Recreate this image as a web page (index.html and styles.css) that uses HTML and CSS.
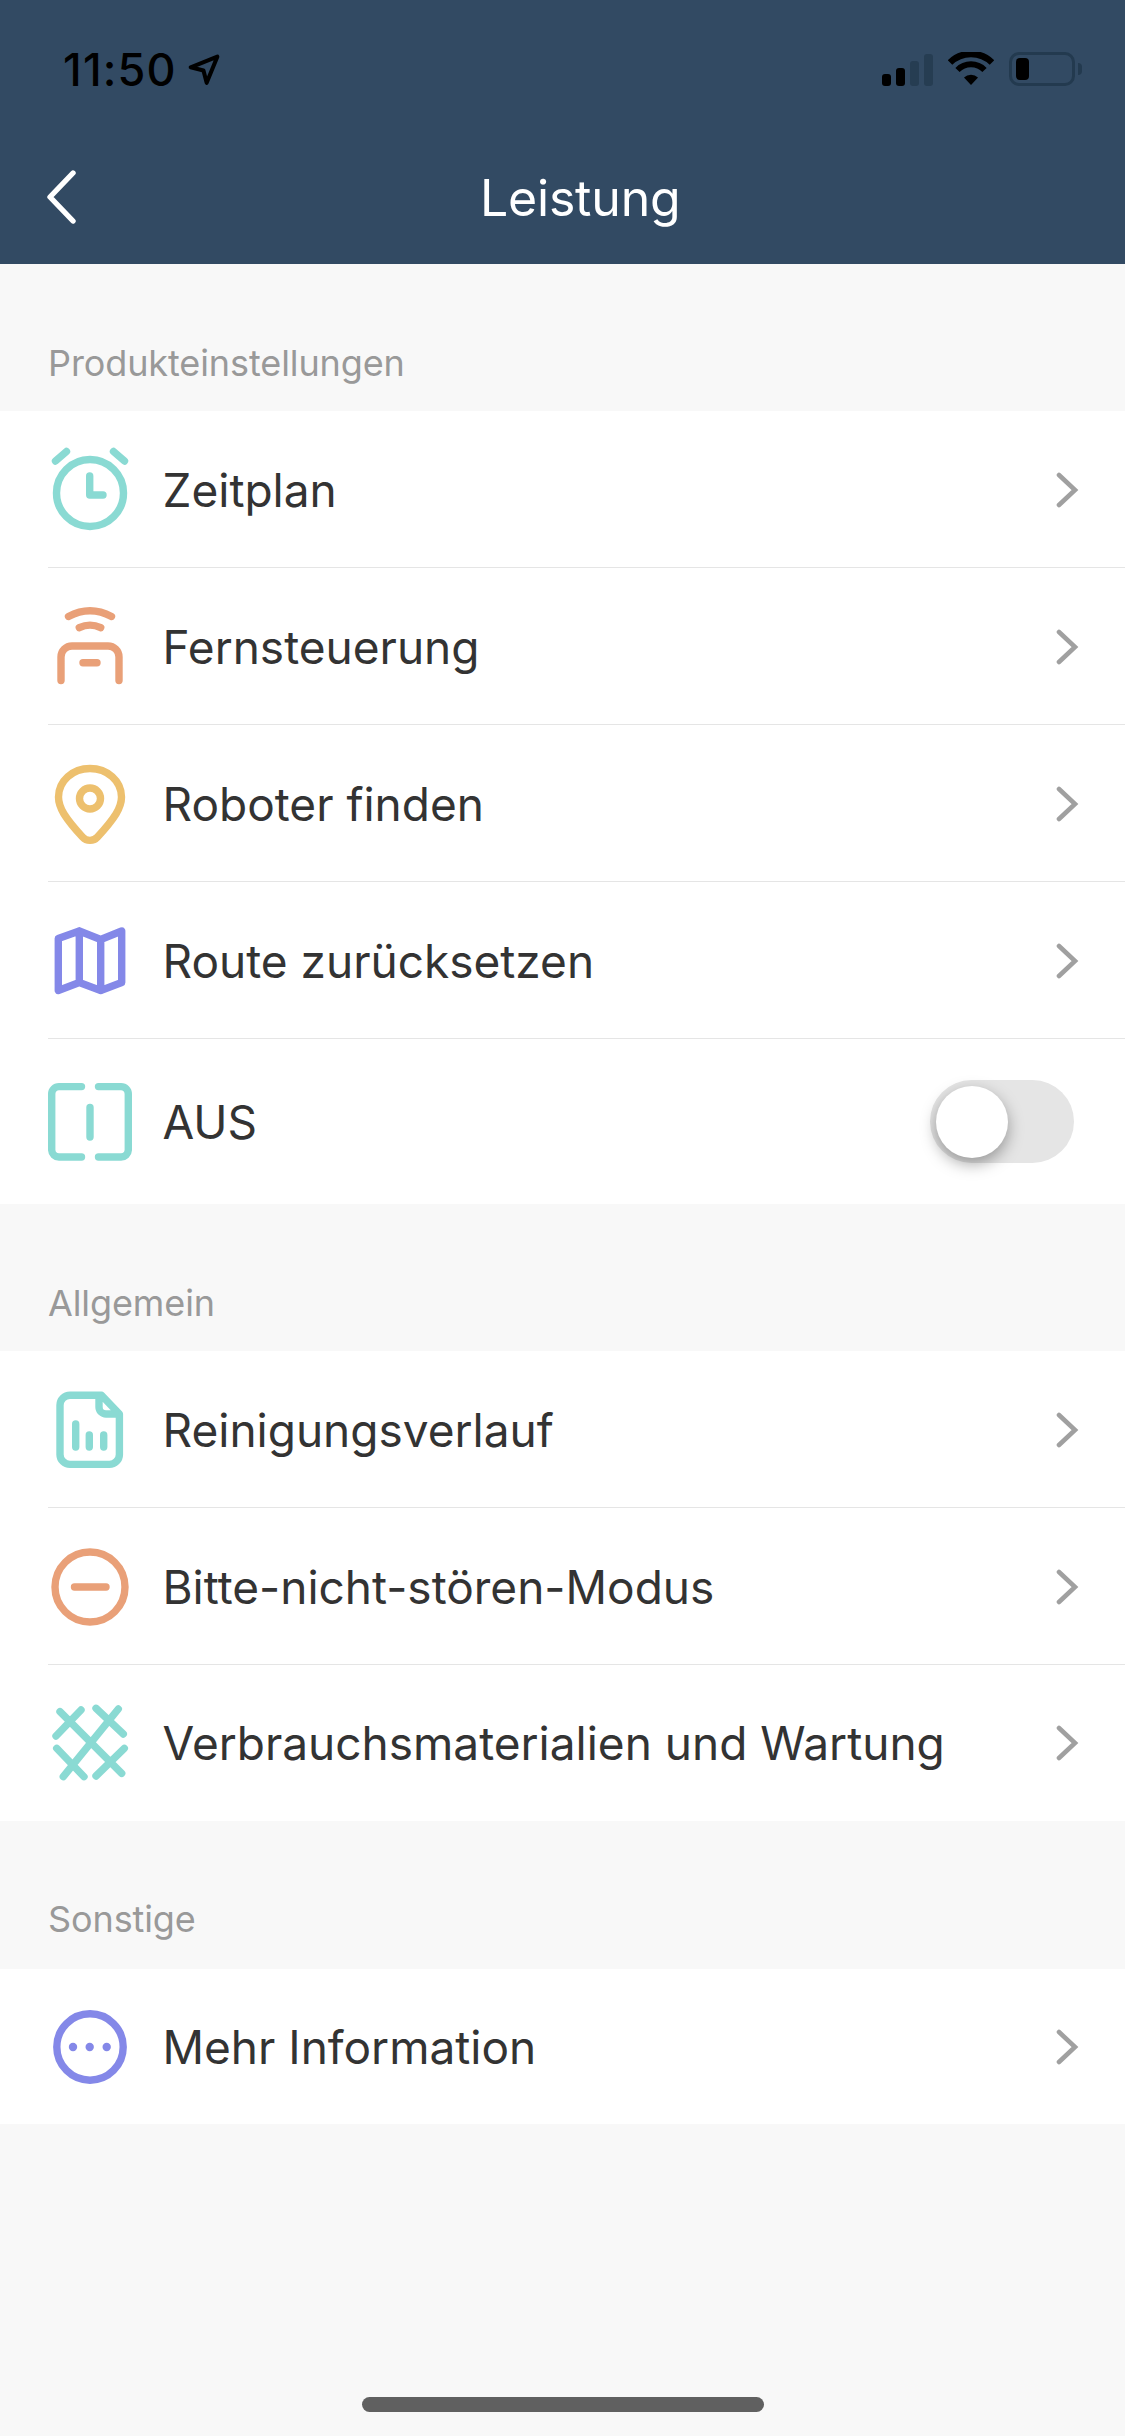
FILE: index.html
```html
<!DOCTYPE html>
<html lang="de">
<head>
    <meta charset="UTF-8">
    <meta name="viewport" content="width=device-width, initial-scale=1.0">
    <title>Leistung</title>
    <link rel="stylesheet" href="styles.css">
</head>
<body>
    <header class="top">
        <div class="status">
            <div class="status-left">
                <span class="time">11:50</span>
                <svg class="loc" width="32" height="32" viewBox="0 0 30 30"><path d="M2.5 12.5 L27.5 2.5 L17.5 27 L14.5 15.5 Z" fill="none" stroke="#000" stroke-width="3.8" stroke-linejoin="round"/></svg>
            </div>
            <div class="status-right">
                <div class="signal">
                    <span class="bar bar1"></span>
                    <span class="bar bar2"></span>
                    <span class="bar bar3"></span>
                    <span class="bar bar4"></span>
                </div>
                <svg class="wifi" width="46" height="34" viewBox="0 0 46 34"><path d="M2 10.5 A30 30 0 0 1 44 10.5" fill="none" stroke="#000" stroke-width="6.5"/><path d="M9.5 18 A19 19 0 0 1 36.5 18" fill="none" stroke="#000" stroke-width="6"/><path d="M16 25.5 A10 10 0 0 1 30 25.5 L23 33 Z" fill="#000"/></svg>
                <div class="battery"><span class="level"></span></div>
                <span class="nub"></span>
            </div>
        </div>
        <div class="nav">
            <svg class="back" width="32" height="54" viewBox="0 0 32 54"><path d="M27 3 L4 27 L27 51" fill="none" stroke="#fff" stroke-width="5.4" stroke-linecap="round" stroke-linejoin="round"/></svg>
            <h1 class="title">Leistung</h1>
        </div>
    </header>

    <h2 class="group-title">Produkteinstellungen</h2>
    <ul class="group">
        <li class="row">
            <svg class="icon teal" viewBox="0 0 100 100"><circle cx="50" cy="53" r="33.5"/><path d="M15.5 21 L26.5 11.5 M84.5 21 L73.5 11.5 M49.7 36 V55 H63"/></svg>
            <span class="label">Zeitplan</span>
            <svg class="chev" width="24" height="36" viewBox="0 0 24 36"><path d="M4 3 L20 18 L4 33"/></svg>
        </li>
        <li class="row">
            <svg class="icon orange" viewBox="0 0 100 100"><path d="M28.5 19.5 Q50 8 71.5 19.5 M39.3 30.7 Q50 25.5 60.7 30.7 M21 83.5 V60 A11 11 0 0 1 32 49 H68 A11 11 0 0 1 79 60 V83.5 M43 65.7 H57"/></svg>
            <span class="label">Fernsteuerung</span>
            <svg class="chev" width="24" height="36" viewBox="0 0 24 36"><path d="M4 3 L20 18 L4 33"/></svg>
        </li>
        <li class="row">
            <svg class="icon yellow" viewBox="0 0 100 100"><path d="M50 14.5 C32.6 14.5 18.5 27 18.5 43 C18.5 50 21 55 24 60 C29 68 36 76 42.5 83 C46.5 87.5 53.5 87.5 57.5 83 C64 76 71 68 76 60 C79 55 81.5 50 81.5 43 C81.5 27 67.4 14.5 50 14.5 Z"/><circle cx="50" cy="44.5" r="10.5"/></svg>
            <span class="label">Roboter finden</span>
            <svg class="chev" width="24" height="36" viewBox="0 0 24 36"><path d="M4 3 L20 18 L4 33"/></svg>
        </li>
        <li class="row">
            <svg class="icon purple" viewBox="0 0 100 100"><path d="M18.3 27.5 L39.3 20 L60.7 28.5 L81.7 20 V71.5 L60.7 79.5 L39.3 71.5 L18.3 79.5 Z M39.3 20 V71.5 M60.7 28.5 V79.5"/></svg>
            <span class="label">Route zurücksetzen</span>
            <svg class="chev" width="24" height="36" viewBox="0 0 24 36"><path d="M4 3 L20 18 L4 33"/></svg>
        </li>
        <li class="row row-tall">
            <svg class="icon teal" viewBox="0 0 100 100"><path d="M41.5 14.6 H19 A7.3 7.3 0 0 0 11.7 22 V78 A7.3 7.3 0 0 0 19 85 H41.5 M58.5 14.6 H81 A7.3 7.3 0 0 1 88.3 22 V78 A7.3 7.3 0 0 1 81 85 H58.5 M50 35.5 V65"/></svg>
            <span class="label">AUS</span>
            <div class="toggle"><span class="knob"></span></div>
        </li>
    </ul>

    <h2 class="group-title">Allgemein</h2>
    <ul class="group">
        <li class="row">
            <svg class="icon teal" viewBox="0 0 100 100"><path d="M61.5 15.3 H30 A10 10 0 0 0 20 25.3 V74.4 A10 10 0 0 0 30 84.4 H69.4 A10 10 0 0 0 79.4 74.4 V34 Z M59 16 V27 A7 7 0 0 0 66 34 H79 M35.7 44 V67 M49.3 55 V67 M63.7 55 V67"/></svg>
            <span class="label">Reinigungsverlauf</span>
            <svg class="chev" width="24" height="36" viewBox="0 0 24 36"><path d="M4 3 L20 18 L4 33"/></svg>
        </li>
        <li class="row">
            <svg class="icon orange" viewBox="0 0 100 100"><circle cx="50" cy="50" r="35"/><path d="M34.5 50 H66"/></svg>
            <span class="label">Bitte-nicht-stören-Modus</span>
            <svg class="chev" width="24" height="36" viewBox="0 0 24 36"><path d="M4 3 L20 18 L4 33"/></svg>
        </li>
        <li class="row row-end">
            <svg class="icon teal" viewBox="0 0 100 100"><path d="M20 18.7 L81.7 80.3 M78.3 16 L23.3 83.7 M41 17 L16 43 M56 15.3 L83.3 41 M16.7 55.3 L44 83.7 M84.3 55.3 L56 83"/></svg>
            <span class="label">Verbrauchsmaterialien und Wartung</span>
            <svg class="chev" width="24" height="36" viewBox="0 0 24 36"><path d="M4 3 L20 18 L4 33"/></svg>
        </li>
    </ul>

    <h2 class="group-title group-title-low">Sonstige</h2>
    <ul class="group">
        <li class="row row-short">
            <svg class="icon purple" viewBox="0 0 100 100"><circle cx="50" cy="50" r="33.2"/><circle class="dot" cx="33" cy="50" r="4.2"/><circle class="dot" cx="49.7" cy="50" r="4.2"/><circle class="dot" cx="66.7" cy="50" r="4.2"/></svg>
            <span class="label">Mehr Information</span>
            <svg class="chev" width="24" height="36" viewBox="0 0 24 36"><path d="M4 3 L20 18 L4 33"/></svg>
        </li>
    </ul>

    <div class="home-bar"></div>
</body>
</html>
```

FILE: styles.css
```css
* {
    box-sizing: border-box;
}
html, body {
    height: 100%;
}
body {
    margin: 0;
    min-height: 2436px;
    display: flex;
    flex-direction: column;
    font-family: Inter, "Noto Sans", sans-serif;
    background-color: #f8f8f8;
    color: #333;
    overflow: hidden;
}

/* header */
.top {
    height: 264px;
    background-color: #324a63;
    display: flex;
    flex-direction: column;
}
.status {
    height: 136px;
    padding: 46px 43px 0 63px;
    display: flex;
    justify-content: space-between;
    align-items: flex-start;
}
.status-left {
    display: flex;
    align-items: center;
    gap: 11px;
}
.time {
    font-size: 45px;
    line-height: 48px;
    font-weight: 500;
    letter-spacing: 1.2px;
    color: #000;
}
.status-right {
    display: flex;
    align-items: flex-end;
    padding-top: 6px;
}
.signal {
    display: flex;
    align-items: flex-end;
    gap: 5px;
    height: 33px;
    margin-right: 15px;
}
.bar {
    width: 9px;
    border-radius: 3px;
    background-color: #000;
}
.bar1 { height: 12px; }
.bar2 { height: 18px; }
.bar3 { height: 25px; background-color: #263d52; }
.bar4 { height: 32px; background-color: #263d52; }
.wifi {
    margin-right: 15px;
}
.battery {
    width: 66px;
    height: 34px;
    border: 3px solid #233a4f;
    border-radius: 10px;
    padding: 3px 4px;
}
.level {
    display: block;
    width: 13px;
    height: 22px;
    border-radius: 4px;
    background-color: #000;
}
.nub {
    width: 4px;
    height: 12px;
    margin: 0 0 11px 3px;
    border-radius: 0 4px 4px 0;
    background-color: #233a4f;
}
.nav {
    flex: 1;
    display: flex;
    align-items: center;
    padding-left: 46px;
}
.back {
    margin-bottom: 6px;
}
.title {
    margin: 0 0 4px 402px;
    font-size: 50px;
    font-weight: 400;
    letter-spacing: -0.2px;
    line-height: 58px;
    color: #fff;
}

/* lists */
.group-title {
    margin: 0;
    padding: 0 48px 28px;
    height: 147px;
    display: flex;
    align-items: flex-end;
    font-size: 36px;
    line-height: 40px;
    font-weight: 400;
    letter-spacing: -0.1px;
    color: #999;
}
.group-title-low {
    height: 148px;
    padding-bottom: 30px;
}
.group {
    list-style: none;
    margin: 0;
    padding: 0;
    background-color: #fff;
}
.row {
    height: 157px;
    display: flex;
    align-items: center;
    padding-left: 40px;
    padding-right: 46px;
    position: relative;
}
.row::after {
    content: "";
    position: absolute;
    left: 48px;
    right: 0;
    bottom: 0;
    height: 1px;
    background-color: #e5e5e5;
}
.row:last-child::after {
    display: none;
}
.row-tall {
    height: 165px;
}
.row-end {
    height: 156px;
}
.row-short {
    height: 155px;
}
.label {
    flex: 1;
    margin-left: 22.5px;
    font-size: 46px;
    line-height: 54px;
}
.icon {
    width: 100px;
    height: 100px;
    flex-shrink: 0;
    fill: none;
    stroke-width: 7.4;
    stroke-linecap: round;
    stroke-linejoin: round;
}
.teal { stroke: #8adad3; }
.orange { stroke: #e9a078; }
.yellow { stroke: #edc06e; }
.purple { stroke: #8488e8; }
.dot {
    fill: #8488e8;
    stroke: none;
}
.chev {
    fill: none;
    stroke: #a0a0a0;
    stroke-width: 4.6;
    stroke-linecap: round;
    stroke-linejoin: miter;
}
.toggle {
    width: 144px;
    height: 83px;
    margin-right: 5px;
    padding: 6px;
    border-radius: 42px;
    background-color: #e5e5e5;
}
.knob {
    display: block;
    width: 72px;
    height: 72px;
    border-radius: 50%;
    background-color: #fff;
    box-shadow: 0 6px 16px rgba(0, 0, 0, 0.35);
}

.home-bar {
    position: absolute;
    left: 362px;
    top: 2397px;
    width: 402px;
    height: 15px;
    border-radius: 8px;
    background-color: #606060;
}
```
